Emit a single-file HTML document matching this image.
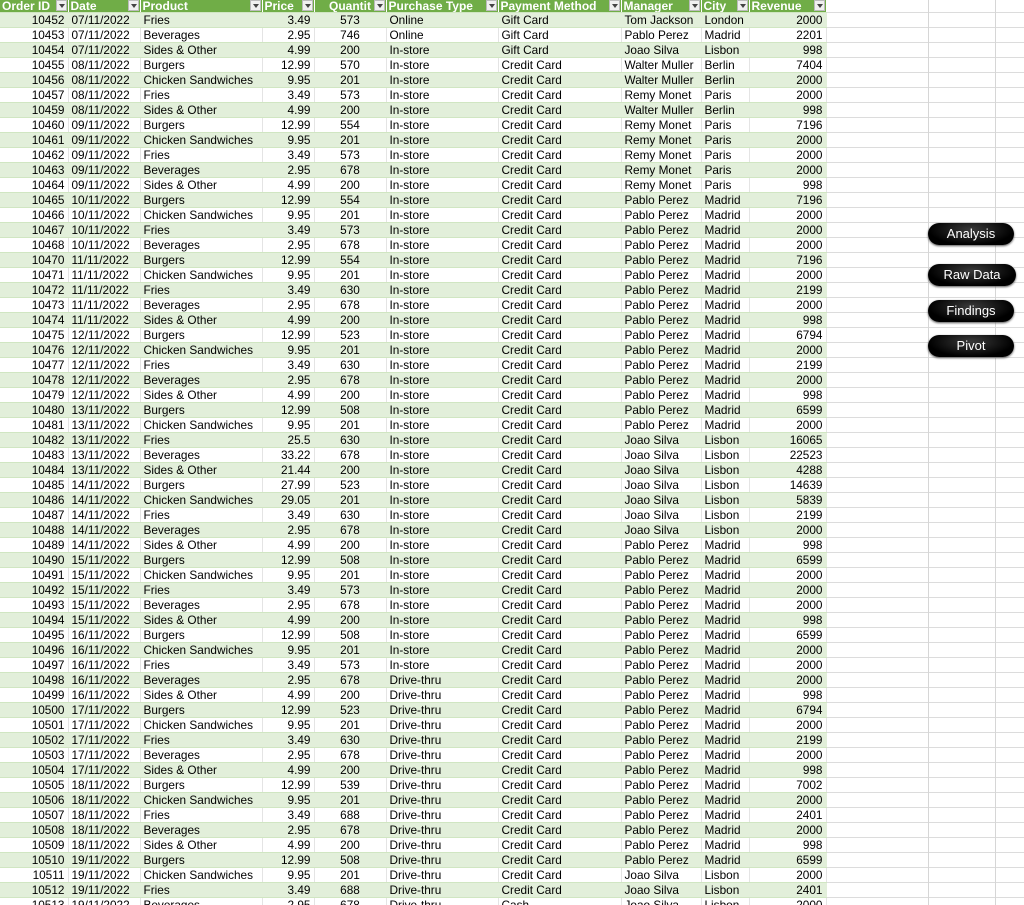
<!DOCTYPE html>
<html><head><meta charset="utf-8"><style>
html,body{margin:0;padding:0;width:1024px;height:905px;overflow:hidden;background:#fff;font-family:"Liberation Sans",Arial,sans-serif}
body{position:relative;background-image:repeating-linear-gradient(to bottom,transparent 0,transparent 11px,#dcdcdc 11px,#dcdcdc 12px,transparent 12px,transparent 15px);background-position:0 1px}
.vl{position:absolute;top:0;width:1px;height:905px;background:#d6d6d6}
table{position:absolute;left:0;top:0;border-collapse:collapse;table-layout:fixed;width:826px;font-size:11.8px;color:#000}
td,th{height:14px;padding:0 3px;white-space:nowrap;overflow:hidden;border-right:1px solid #e4e4e4;border-bottom:1px solid #d0e6c2;line-height:14px;box-sizing:border-box}
th{height:12px;line-height:12px;background:#70ad47;color:#fff;font-weight:bold;text-align:left;position:relative;border-right:1px solid #fff;font-size:12px;padding:0 2px}
th i{position:absolute;right:1px;top:0;width:11px;height:11px;background:#f0f0f0;border:1px solid #bbb;box-sizing:border-box}
th i:after{content:"";position:absolute;left:2px;top:3px;border-left:3px solid transparent;border-right:3px solid transparent;border-top:4px solid #444}
tr:nth-child(even) td{background:#e2efda;border-right-color:#e2efda}
tr{height:15px}
tr.h{height:12px}
.r{text-align:right}.c{text-align:center}
.btn{position:absolute;left:928px;width:86px;height:22px;border-radius:11px;background:radial-gradient(ellipse at 50% 30%,#3a3a3a,#000 70%);color:#fff;font-size:13px;text-align:center;line-height:22px;box-shadow:0 1px 2px #555}
</style></head><body>
<div class="vl" style="left:826px"></div><div class="vl" style="left:928px"></div><div class="vl" style="left:995px"></div>
<table>
<colgroup><col style="width:68px"><col style="width:72px"><col style="width:122px"><col style="width:52px"><col style="width:72px"><col style="width:112px"><col style="width:123px"><col style="width:80px"><col style="width:48px"><col style="width:77px"></colgroup>
<tr class="h"><th>Order ID<i></i></th><th>Date<i></i></th><th>Product<i></i></th><th>Price<i></i></th><th style="text-align:center">Quantit<i></i></th><th>Purchase Type<i></i></th><th>Payment Method<i></i></th><th>Manager<i></i></th><th>City<i></i></th><th>Revenue<i></i></th></tr>
<tr><td class="r">10452</td><td>07/11/2022</td><td>Fries</td><td class="r">3.49</td><td class="c">573</td><td>Online</td><td>Gift Card</td><td>Tom Jackson</td><td>London</td><td class="r">2000</td></tr>
<tr><td class="r">10453</td><td>07/11/2022</td><td>Beverages</td><td class="r">2.95</td><td class="c">746</td><td>Online</td><td>Gift Card</td><td>Pablo Perez</td><td>Madrid</td><td class="r">2201</td></tr>
<tr><td class="r">10454</td><td>07/11/2022</td><td>Sides &amp; Other</td><td class="r">4.99</td><td class="c">200</td><td>In-store</td><td>Gift Card</td><td>Joao Silva</td><td>Lisbon</td><td class="r">998</td></tr>
<tr><td class="r">10455</td><td>08/11/2022</td><td>Burgers</td><td class="r">12.99</td><td class="c">570</td><td>In-store</td><td>Credit Card</td><td>Walter Muller</td><td>Berlin</td><td class="r">7404</td></tr>
<tr><td class="r">10456</td><td>08/11/2022</td><td>Chicken Sandwiches</td><td class="r">9.95</td><td class="c">201</td><td>In-store</td><td>Credit Card</td><td>Walter Muller</td><td>Berlin</td><td class="r">2000</td></tr>
<tr><td class="r">10457</td><td>08/11/2022</td><td>Fries</td><td class="r">3.49</td><td class="c">573</td><td>In-store</td><td>Credit Card</td><td>Remy Monet</td><td>Paris</td><td class="r">2000</td></tr>
<tr><td class="r">10459</td><td>08/11/2022</td><td>Sides &amp; Other</td><td class="r">4.99</td><td class="c">200</td><td>In-store</td><td>Credit Card</td><td>Walter Muller</td><td>Berlin</td><td class="r">998</td></tr>
<tr><td class="r">10460</td><td>09/11/2022</td><td>Burgers</td><td class="r">12.99</td><td class="c">554</td><td>In-store</td><td>Credit Card</td><td>Remy Monet</td><td>Paris</td><td class="r">7196</td></tr>
<tr><td class="r">10461</td><td>09/11/2022</td><td>Chicken Sandwiches</td><td class="r">9.95</td><td class="c">201</td><td>In-store</td><td>Credit Card</td><td>Remy Monet</td><td>Paris</td><td class="r">2000</td></tr>
<tr><td class="r">10462</td><td>09/11/2022</td><td>Fries</td><td class="r">3.49</td><td class="c">573</td><td>In-store</td><td>Credit Card</td><td>Remy Monet</td><td>Paris</td><td class="r">2000</td></tr>
<tr><td class="r">10463</td><td>09/11/2022</td><td>Beverages</td><td class="r">2.95</td><td class="c">678</td><td>In-store</td><td>Credit Card</td><td>Remy Monet</td><td>Paris</td><td class="r">2000</td></tr>
<tr><td class="r">10464</td><td>09/11/2022</td><td>Sides &amp; Other</td><td class="r">4.99</td><td class="c">200</td><td>In-store</td><td>Credit Card</td><td>Remy Monet</td><td>Paris</td><td class="r">998</td></tr>
<tr><td class="r">10465</td><td>10/11/2022</td><td>Burgers</td><td class="r">12.99</td><td class="c">554</td><td>In-store</td><td>Credit Card</td><td>Pablo Perez</td><td>Madrid</td><td class="r">7196</td></tr>
<tr><td class="r">10466</td><td>10/11/2022</td><td>Chicken Sandwiches</td><td class="r">9.95</td><td class="c">201</td><td>In-store</td><td>Credit Card</td><td>Pablo Perez</td><td>Madrid</td><td class="r">2000</td></tr>
<tr><td class="r">10467</td><td>10/11/2022</td><td>Fries</td><td class="r">3.49</td><td class="c">573</td><td>In-store</td><td>Credit Card</td><td>Pablo Perez</td><td>Madrid</td><td class="r">2000</td></tr>
<tr><td class="r">10468</td><td>10/11/2022</td><td>Beverages</td><td class="r">2.95</td><td class="c">678</td><td>In-store</td><td>Credit Card</td><td>Pablo Perez</td><td>Madrid</td><td class="r">2000</td></tr>
<tr><td class="r">10470</td><td>11/11/2022</td><td>Burgers</td><td class="r">12.99</td><td class="c">554</td><td>In-store</td><td>Credit Card</td><td>Pablo Perez</td><td>Madrid</td><td class="r">7196</td></tr>
<tr><td class="r">10471</td><td>11/11/2022</td><td>Chicken Sandwiches</td><td class="r">9.95</td><td class="c">201</td><td>In-store</td><td>Credit Card</td><td>Pablo Perez</td><td>Madrid</td><td class="r">2000</td></tr>
<tr><td class="r">10472</td><td>11/11/2022</td><td>Fries</td><td class="r">3.49</td><td class="c">630</td><td>In-store</td><td>Credit Card</td><td>Pablo Perez</td><td>Madrid</td><td class="r">2199</td></tr>
<tr><td class="r">10473</td><td>11/11/2022</td><td>Beverages</td><td class="r">2.95</td><td class="c">678</td><td>In-store</td><td>Credit Card</td><td>Pablo Perez</td><td>Madrid</td><td class="r">2000</td></tr>
<tr><td class="r">10474</td><td>11/11/2022</td><td>Sides &amp; Other</td><td class="r">4.99</td><td class="c">200</td><td>In-store</td><td>Credit Card</td><td>Pablo Perez</td><td>Madrid</td><td class="r">998</td></tr>
<tr><td class="r">10475</td><td>12/11/2022</td><td>Burgers</td><td class="r">12.99</td><td class="c">523</td><td>In-store</td><td>Credit Card</td><td>Pablo Perez</td><td>Madrid</td><td class="r">6794</td></tr>
<tr><td class="r">10476</td><td>12/11/2022</td><td>Chicken Sandwiches</td><td class="r">9.95</td><td class="c">201</td><td>In-store</td><td>Credit Card</td><td>Pablo Perez</td><td>Madrid</td><td class="r">2000</td></tr>
<tr><td class="r">10477</td><td>12/11/2022</td><td>Fries</td><td class="r">3.49</td><td class="c">630</td><td>In-store</td><td>Credit Card</td><td>Pablo Perez</td><td>Madrid</td><td class="r">2199</td></tr>
<tr><td class="r">10478</td><td>12/11/2022</td><td>Beverages</td><td class="r">2.95</td><td class="c">678</td><td>In-store</td><td>Credit Card</td><td>Pablo Perez</td><td>Madrid</td><td class="r">2000</td></tr>
<tr><td class="r">10479</td><td>12/11/2022</td><td>Sides &amp; Other</td><td class="r">4.99</td><td class="c">200</td><td>In-store</td><td>Credit Card</td><td>Pablo Perez</td><td>Madrid</td><td class="r">998</td></tr>
<tr><td class="r">10480</td><td>13/11/2022</td><td>Burgers</td><td class="r">12.99</td><td class="c">508</td><td>In-store</td><td>Credit Card</td><td>Pablo Perez</td><td>Madrid</td><td class="r">6599</td></tr>
<tr><td class="r">10481</td><td>13/11/2022</td><td>Chicken Sandwiches</td><td class="r">9.95</td><td class="c">201</td><td>In-store</td><td>Credit Card</td><td>Pablo Perez</td><td>Madrid</td><td class="r">2000</td></tr>
<tr><td class="r">10482</td><td>13/11/2022</td><td>Fries</td><td class="r">25.5</td><td class="c">630</td><td>In-store</td><td>Credit Card</td><td>Joao Silva</td><td>Lisbon</td><td class="r">16065</td></tr>
<tr><td class="r">10483</td><td>13/11/2022</td><td>Beverages</td><td class="r">33.22</td><td class="c">678</td><td>In-store</td><td>Credit Card</td><td>Joao Silva</td><td>Lisbon</td><td class="r">22523</td></tr>
<tr><td class="r">10484</td><td>13/11/2022</td><td>Sides &amp; Other</td><td class="r">21.44</td><td class="c">200</td><td>In-store</td><td>Credit Card</td><td>Joao Silva</td><td>Lisbon</td><td class="r">4288</td></tr>
<tr><td class="r">10485</td><td>14/11/2022</td><td>Burgers</td><td class="r">27.99</td><td class="c">523</td><td>In-store</td><td>Credit Card</td><td>Joao Silva</td><td>Lisbon</td><td class="r">14639</td></tr>
<tr><td class="r">10486</td><td>14/11/2022</td><td>Chicken Sandwiches</td><td class="r">29.05</td><td class="c">201</td><td>In-store</td><td>Credit Card</td><td>Joao Silva</td><td>Lisbon</td><td class="r">5839</td></tr>
<tr><td class="r">10487</td><td>14/11/2022</td><td>Fries</td><td class="r">3.49</td><td class="c">630</td><td>In-store</td><td>Credit Card</td><td>Joao Silva</td><td>Lisbon</td><td class="r">2199</td></tr>
<tr><td class="r">10488</td><td>14/11/2022</td><td>Beverages</td><td class="r">2.95</td><td class="c">678</td><td>In-store</td><td>Credit Card</td><td>Joao Silva</td><td>Lisbon</td><td class="r">2000</td></tr>
<tr><td class="r">10489</td><td>14/11/2022</td><td>Sides &amp; Other</td><td class="r">4.99</td><td class="c">200</td><td>In-store</td><td>Credit Card</td><td>Pablo Perez</td><td>Madrid</td><td class="r">998</td></tr>
<tr><td class="r">10490</td><td>15/11/2022</td><td>Burgers</td><td class="r">12.99</td><td class="c">508</td><td>In-store</td><td>Credit Card</td><td>Pablo Perez</td><td>Madrid</td><td class="r">6599</td></tr>
<tr><td class="r">10491</td><td>15/11/2022</td><td>Chicken Sandwiches</td><td class="r">9.95</td><td class="c">201</td><td>In-store</td><td>Credit Card</td><td>Pablo Perez</td><td>Madrid</td><td class="r">2000</td></tr>
<tr><td class="r">10492</td><td>15/11/2022</td><td>Fries</td><td class="r">3.49</td><td class="c">573</td><td>In-store</td><td>Credit Card</td><td>Pablo Perez</td><td>Madrid</td><td class="r">2000</td></tr>
<tr><td class="r">10493</td><td>15/11/2022</td><td>Beverages</td><td class="r">2.95</td><td class="c">678</td><td>In-store</td><td>Credit Card</td><td>Pablo Perez</td><td>Madrid</td><td class="r">2000</td></tr>
<tr><td class="r">10494</td><td>15/11/2022</td><td>Sides &amp; Other</td><td class="r">4.99</td><td class="c">200</td><td>In-store</td><td>Credit Card</td><td>Pablo Perez</td><td>Madrid</td><td class="r">998</td></tr>
<tr><td class="r">10495</td><td>16/11/2022</td><td>Burgers</td><td class="r">12.99</td><td class="c">508</td><td>In-store</td><td>Credit Card</td><td>Pablo Perez</td><td>Madrid</td><td class="r">6599</td></tr>
<tr><td class="r">10496</td><td>16/11/2022</td><td>Chicken Sandwiches</td><td class="r">9.95</td><td class="c">201</td><td>In-store</td><td>Credit Card</td><td>Pablo Perez</td><td>Madrid</td><td class="r">2000</td></tr>
<tr><td class="r">10497</td><td>16/11/2022</td><td>Fries</td><td class="r">3.49</td><td class="c">573</td><td>In-store</td><td>Credit Card</td><td>Pablo Perez</td><td>Madrid</td><td class="r">2000</td></tr>
<tr><td class="r">10498</td><td>16/11/2022</td><td>Beverages</td><td class="r">2.95</td><td class="c">678</td><td>Drive-thru</td><td>Credit Card</td><td>Pablo Perez</td><td>Madrid</td><td class="r">2000</td></tr>
<tr><td class="r">10499</td><td>16/11/2022</td><td>Sides &amp; Other</td><td class="r">4.99</td><td class="c">200</td><td>Drive-thru</td><td>Credit Card</td><td>Pablo Perez</td><td>Madrid</td><td class="r">998</td></tr>
<tr><td class="r">10500</td><td>17/11/2022</td><td>Burgers</td><td class="r">12.99</td><td class="c">523</td><td>Drive-thru</td><td>Credit Card</td><td>Pablo Perez</td><td>Madrid</td><td class="r">6794</td></tr>
<tr><td class="r">10501</td><td>17/11/2022</td><td>Chicken Sandwiches</td><td class="r">9.95</td><td class="c">201</td><td>Drive-thru</td><td>Credit Card</td><td>Pablo Perez</td><td>Madrid</td><td class="r">2000</td></tr>
<tr><td class="r">10502</td><td>17/11/2022</td><td>Fries</td><td class="r">3.49</td><td class="c">630</td><td>Drive-thru</td><td>Credit Card</td><td>Pablo Perez</td><td>Madrid</td><td class="r">2199</td></tr>
<tr><td class="r">10503</td><td>17/11/2022</td><td>Beverages</td><td class="r">2.95</td><td class="c">678</td><td>Drive-thru</td><td>Credit Card</td><td>Pablo Perez</td><td>Madrid</td><td class="r">2000</td></tr>
<tr><td class="r">10504</td><td>17/11/2022</td><td>Sides &amp; Other</td><td class="r">4.99</td><td class="c">200</td><td>Drive-thru</td><td>Credit Card</td><td>Pablo Perez</td><td>Madrid</td><td class="r">998</td></tr>
<tr><td class="r">10505</td><td>18/11/2022</td><td>Burgers</td><td class="r">12.99</td><td class="c">539</td><td>Drive-thru</td><td>Credit Card</td><td>Pablo Perez</td><td>Madrid</td><td class="r">7002</td></tr>
<tr><td class="r">10506</td><td>18/11/2022</td><td>Chicken Sandwiches</td><td class="r">9.95</td><td class="c">201</td><td>Drive-thru</td><td>Credit Card</td><td>Pablo Perez</td><td>Madrid</td><td class="r">2000</td></tr>
<tr><td class="r">10507</td><td>18/11/2022</td><td>Fries</td><td class="r">3.49</td><td class="c">688</td><td>Drive-thru</td><td>Credit Card</td><td>Pablo Perez</td><td>Madrid</td><td class="r">2401</td></tr>
<tr><td class="r">10508</td><td>18/11/2022</td><td>Beverages</td><td class="r">2.95</td><td class="c">678</td><td>Drive-thru</td><td>Credit Card</td><td>Pablo Perez</td><td>Madrid</td><td class="r">2000</td></tr>
<tr><td class="r">10509</td><td>18/11/2022</td><td>Sides &amp; Other</td><td class="r">4.99</td><td class="c">200</td><td>Drive-thru</td><td>Credit Card</td><td>Pablo Perez</td><td>Madrid</td><td class="r">998</td></tr>
<tr><td class="r">10510</td><td>19/11/2022</td><td>Burgers</td><td class="r">12.99</td><td class="c">508</td><td>Drive-thru</td><td>Credit Card</td><td>Pablo Perez</td><td>Madrid</td><td class="r">6599</td></tr>
<tr><td class="r">10511</td><td>19/11/2022</td><td>Chicken Sandwiches</td><td class="r">9.95</td><td class="c">201</td><td>Drive-thru</td><td>Credit Card</td><td>Joao Silva</td><td>Lisbon</td><td class="r">2000</td></tr>
<tr><td class="r">10512</td><td>19/11/2022</td><td>Fries</td><td class="r">3.49</td><td class="c">688</td><td>Drive-thru</td><td>Credit Card</td><td>Joao Silva</td><td>Lisbon</td><td class="r">2401</td></tr>
<tr><td class="r">10513</td><td>19/11/2022</td><td>Beverages</td><td class="r">2.95</td><td class="c">678</td><td>Drive-thru</td><td>Cash</td><td>Joao Silva</td><td>Lisbon</td><td class="r">2000</td></tr>
</table>
<div class="btn" style="top:223px">Analysis</div>
<div class="btn" style="top:264px;width:88px">Raw Data</div>
<div class="btn" style="top:300px">Findings</div>
<div class="btn" style="top:335px">Pivot</div>
</body></html>
